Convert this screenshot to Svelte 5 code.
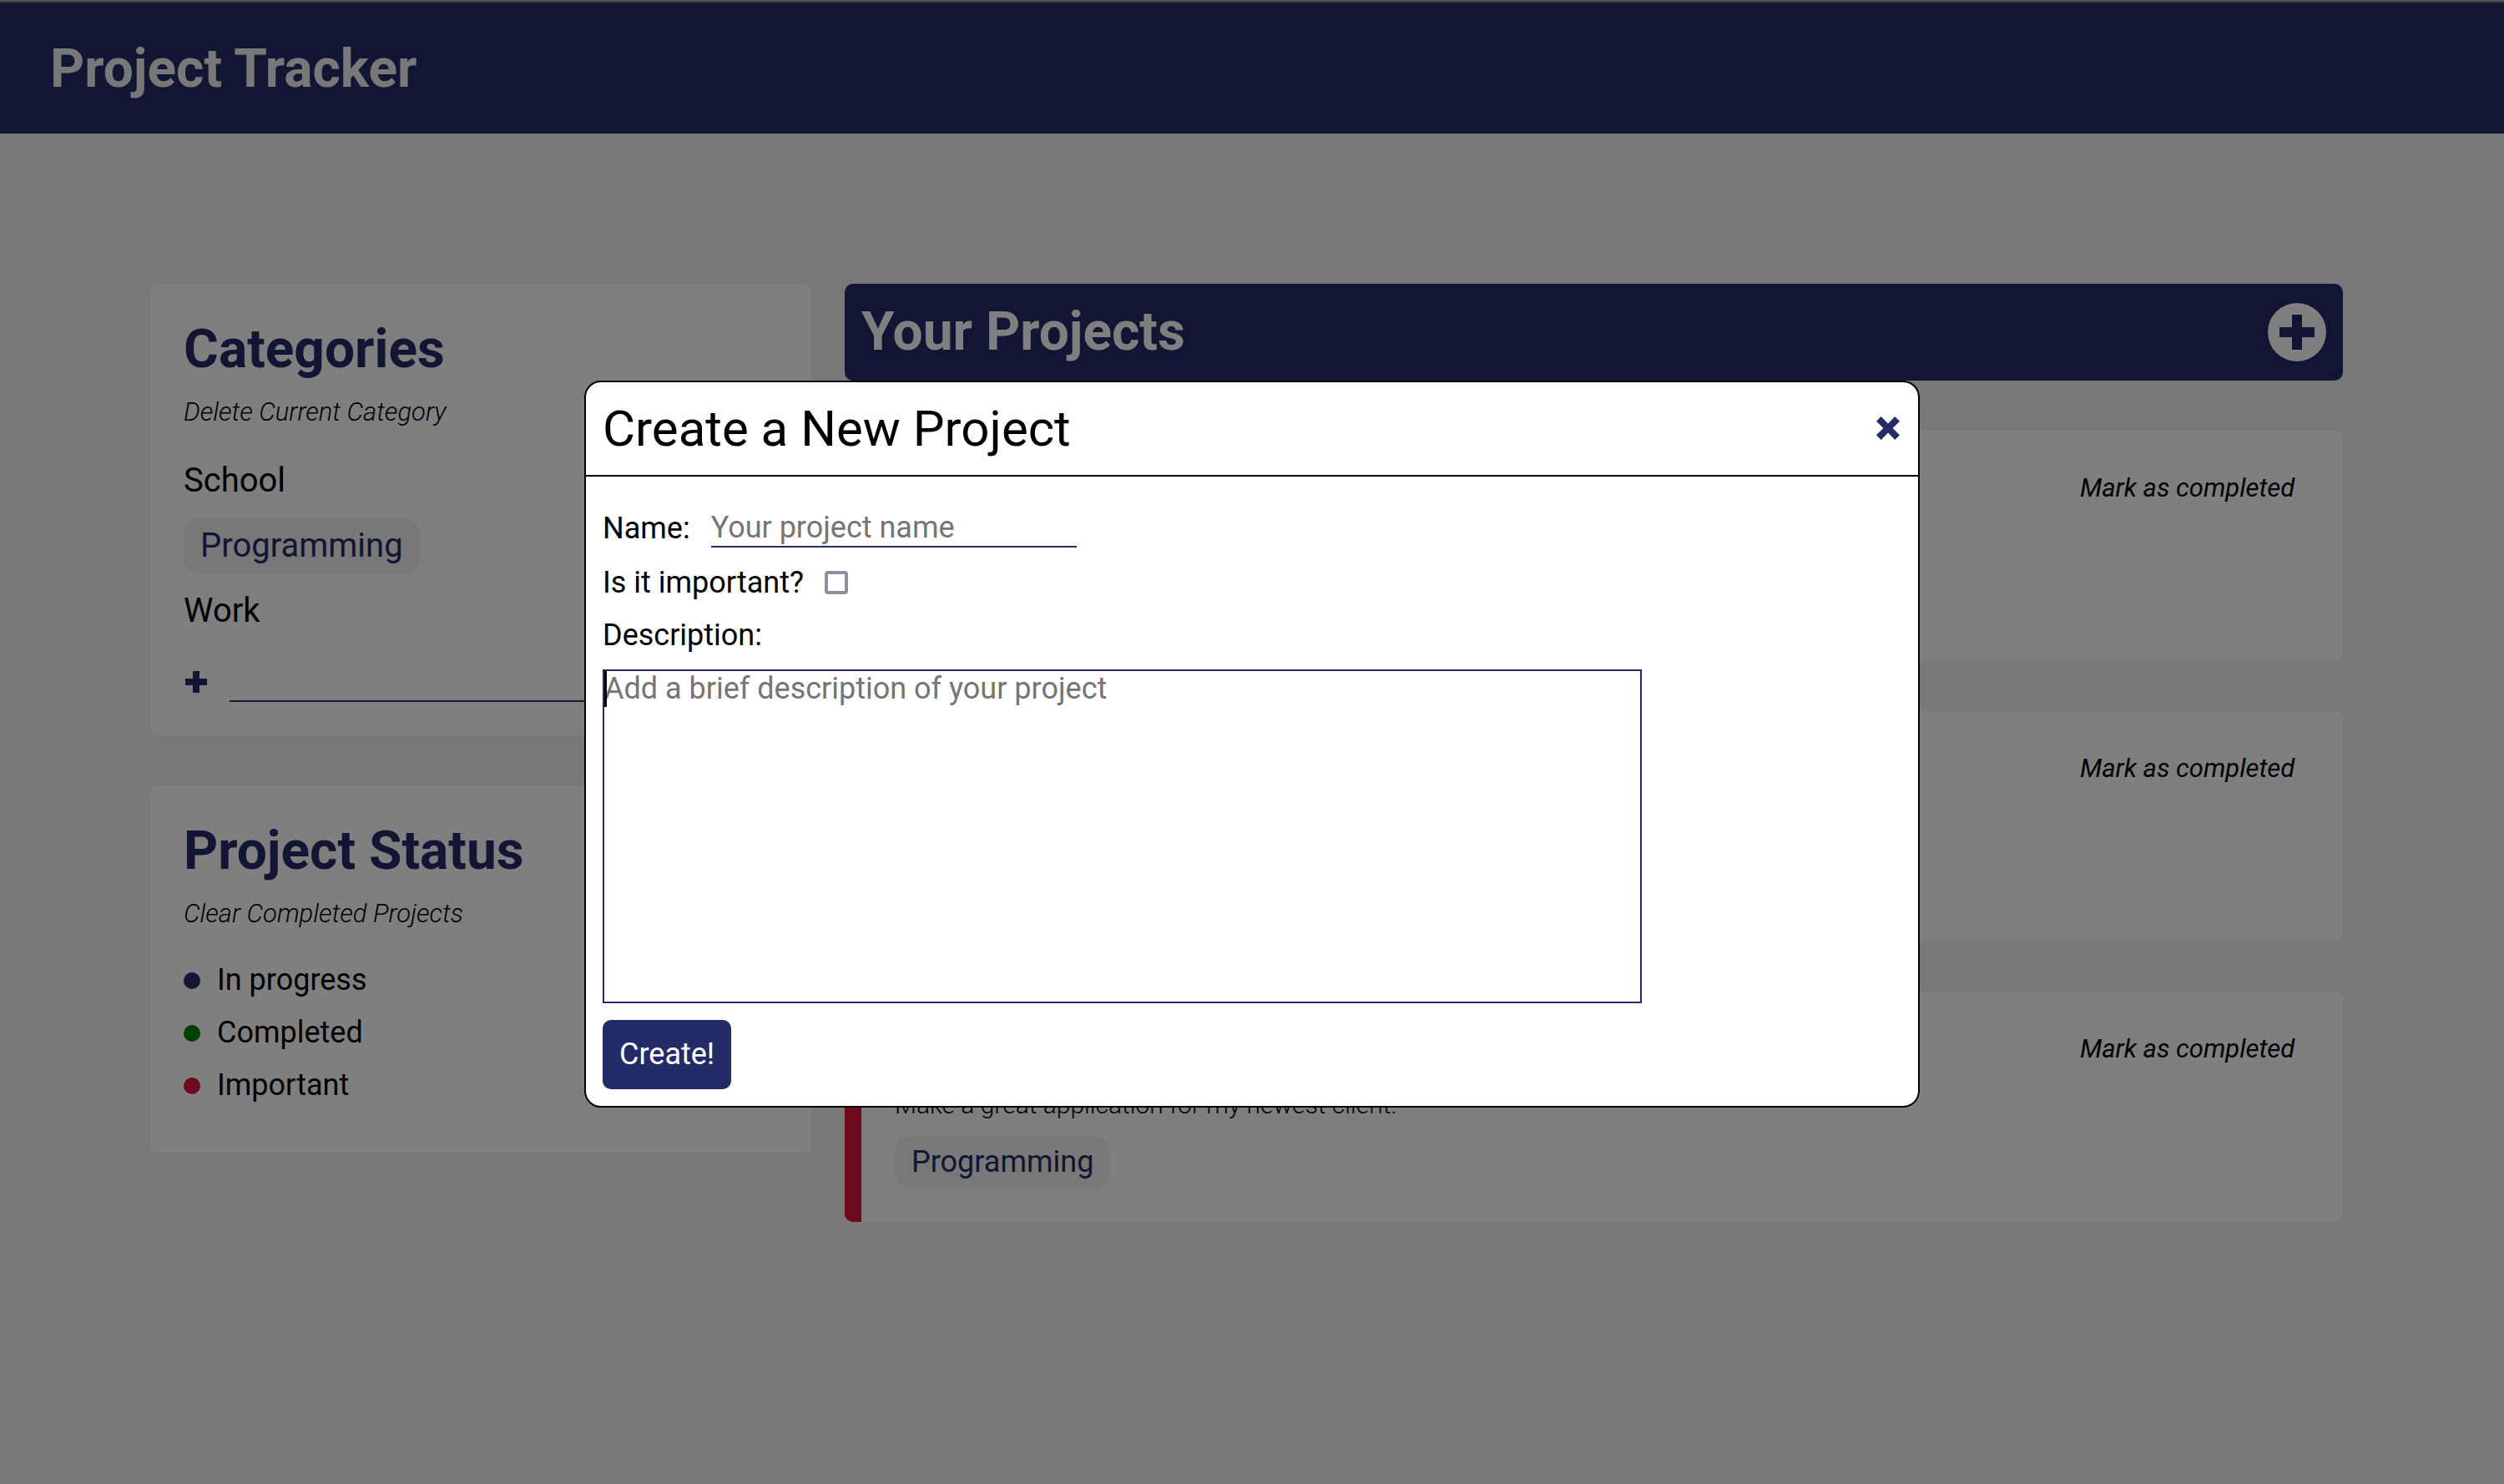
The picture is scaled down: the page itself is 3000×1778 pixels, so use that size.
<script>
  const categories = [
    { name: 'School', active: false },
    { name: 'Programming', active: true },
    { name: 'Work', active: false }
  ];
  const statuses = [
    { name: 'In progress', tone: 'navy' },
    { name: 'Completed', tone: 'green' },
    { name: 'Important', tone: 'crimson' }
  ];
  const projects = [
    { tone: 'navy', description: '', tag: '' },
    { tone: 'navy', description: '', tag: '' },
    { tone: 'crimson', description: 'Make a great application for my newest client.', tag: 'Programming' }
  ];
  let name = $state('');
  let important = $state(false);
  let description = $state('');
  let newCategory = $state('');
</script>

<div class="edge"></div>
<div class="page">
  <header class="topbar"><h1>Project Tracker</h1></header>

  <main>
    <aside>
      <section class="panel categories">
        <h2>Categories</h2>
        <button class="subtle">Delete Current Category</button>
        <ul class="category-list">
          {#each categories as c}
            <li><button class="category" class:active={c.active}>{c.name}</button></li>
          {/each}
        </ul>
        <div class="add-row">
          <button class="icon" aria-label="Add category">
            <svg width="30" height="30" viewBox="0 0 30 30"><path d="M11 2h8v9h9v8h-9v9h-8v-9H2v-8h9z" /></svg>
          </button>
          <input type="text" aria-label="New category" bind:value={newCategory} />
        </div>
      </section>

      <section class="panel status">
        <h2>Project Status</h2>
        <button class="subtle">Clear Completed Projects</button>
        <ul class="status-list">
          {#each statuses as s}
            <li><span class="dot {s.tone}"></span>{s.name}</li>
          {/each}
        </ul>
      </section>
    </aside>

    <section class="projects">
      <div class="projects-bar">
        <h2>Your Projects</h2>
        <button class="add-project" aria-label="Add project">
          <svg width="42" height="42" viewBox="0 0 42 42"><path d="M15 0h12v15h15v12H27v15H15V27H0V15h15z" /></svg>
        </button>
      </div>
      {#each projects as p}
        <article class="card {p.tone}">
          <div class="card-head"><button class="mark">Mark as completed</button></div>
          {#if p.description}<p>{p.description}</p>{/if}
          {#if p.tag}<span class="tag">{p.tag}</span>{/if}
        </article>
      {/each}
    </section>
  </main>
</div>

<div class="overlay">
  <div class="modal" role="dialog" aria-modal="true" aria-labelledby="modal-title">
    <div class="modal-head">
      <h2 id="modal-title">Create a New Project</h2>
      <button class="icon" aria-label="Close">
        <svg width="32" height="32" viewBox="0 0 32 32"><path d="M7.7 2 16 10.4 24.3 2 30 7.7 21.6 16 30 24.3 24.3 30 16 21.6 7.7 30 2 24.3 10.4 16 2 7.7z" /></svg>
      </button>
    </div>
    <form onsubmit={(e) => e.preventDefault()}>
      <div class="field name">
        <label for="name">Name:</label>
        <input id="name" type="text" placeholder="Your project name" bind:value={name} />
      </div>
      <div class="field check">
        <label for="important">Is it important?</label>
        <input id="important" type="checkbox" bind:checked={important} />
      </div>
      <label class="desc-label" for="description">Description:</label>
      <div class="area">
        <textarea id="description" placeholder="Add a brief description of your project" bind:value={description}></textarea>
        <span class="caret"></span>
      </div>
      <button class="create" type="submit">Create!</button>
    </form>
  </div>
</div>

<style>
  :global(body) {
    background: #f0f0f0;
    font-family: Roboto, sans-serif;
    color: #000;
  }
  :global(*) {
    box-sizing: border-box;
  }
  h1, h2, p, ul {
    margin: 0;
    padding: 0;
  }
  ul {
    list-style: none;
  }
  button, input, textarea {
    font: inherit;
    color: inherit;
    background: none;
    border: 0;
    border-radius: 0;
    padding: 0;
    margin: 0;
    outline: 0;
  }
  button {
    cursor: pointer;
  }
  svg {
    display: block;
    fill: #242c68;
  }
  h1, h2 {
    font-size: 64px;
    line-height: 78px;
    font-weight: 700;
  }
  .edge {
    height: 4px;
    background: #515156;
    border-bottom: 2px solid #2b2a33;
  }
  .topbar {
    background: #242c68;
    color: #f0f0f0;
    padding: 40px 60px 38px;
  }
  main {
    display: grid;
    grid-template-columns: 30% 68%;
    gap: 40px;
    align-items: start;
    padding: 180px 6%;
  }
  aside, .projects {
    display: flex;
    flex-direction: column;
    gap: 60px;
  }
  .panel {
    background: #fff;
    border-radius: 10px;
    padding: 40px;
  }
  .panel h2 {
    color: #242c68;
  }
  .subtle {
    display: block;
    font-size: 31px;
    line-height: 36px;
    font-style: italic;
    font-weight: 300;
    margin-top: 18px;
  }
  .category-list {
    display: flex;
    flex-direction: column;
    align-items: flex-start;
    gap: 20px;
    margin-top: 40px;
    font-size: 40px;
    line-height: 48px;
  }
  .category {
    display: block;
  }
  .category.active {
    background: #f0f0f0;
    color: #242c68;
    border-radius: 20px;
    padding: 10px 20px;
  }
  .add-row {
    display: flex;
    align-items: center;
    gap: 25px;
    margin-top: 36px;
  }
  .add-row input {
    flex: 1;
    min-width: 0;
    height: 49px;
    border-bottom: 2px solid #242c68;
  }
  .status-list {
    display: flex;
    flex-direction: column;
    gap: 20px;
    margin-top: 40px;
    padding-bottom: 20px;
    font-size: 36px;
    line-height: 43px;
  }
  .status-list li {
    display: flex;
    align-items: center;
    gap: 20px;
  }
  .dot {
    width: 20px;
    height: 20px;
    border-radius: 50%;
  }
  .dot.navy {
    background: #242c68;
  }
  .dot.green {
    background: #008000;
  }
  .dot.crimson {
    background: #dc143c;
  }
  .projects-bar {
    display: flex;
    align-items: center;
    justify-content: space-between;
    background: #242c68;
    color: #fff;
    border-radius: 10px;
    padding: 19px 20px;
  }
  .add-project {
    display: flex;
    align-items: center;
    justify-content: center;
    width: 70px;
    height: 70px;
    border-radius: 50%;
    background: #fff;
  }
  .card {
    min-height: 276px;
    background: #fff;
    border-left: 20px solid #242c68;
    border-radius: 10px;
    padding: 40px;
  }
  .card.crimson {
    border-left-color: #dc143c;
  }
  .card-head {
    display: flex;
    align-items: center;
    justify-content: flex-end;
    min-height: 58px;
    padding-right: 18px;
  }
  .mark {
    font-size: 31px;
    line-height: 36px;
    font-style: italic;
  }
  .card p {
    margin: 20px 0;
    font-size: 30px;
    line-height: 35px;
    font-weight: 300;
  }
  .tag {
    display: inline-block;
    background: #f0f0f0;
    color: #242c68;
    border-radius: 20px;
    padding: 10px 20px;
    font-size: 36px;
    line-height: 43px;
  }
  .overlay {
    position: fixed;
    inset: 4px 0 0;
    display: flex;
    align-items: center;
    justify-content: center;
    background: rgba(0, 0, 0, 0.5);
  }
  .modal {
    width: 1600px;
    max-width: 100%;
    background: #fff;
    border: 2px solid #000;
    border-radius: 20px;
  }
  .modal-head {
    display: flex;
    align-items: center;
    justify-content: space-between;
    padding: 20px;
    border-bottom: 2px solid #000;
  }
  .modal-head h2 {
    font-size: 60px;
    line-height: 71px;
    font-weight: 400;
  }
  form {
    display: flex;
    flex-direction: column;
    align-items: flex-start;
    padding: 40px 20px 20px;
    font-size: 36px;
    line-height: 43px;
  }
  .field {
    display: flex;
    align-items: center;
    gap: 25px;
  }
  .name {
    margin-bottom: 20px;
  }
  .name input {
    width: 438px;
    height: 45px;
    border-bottom: 2px solid #242c68;
  }
  .check {
    line-height: 45px;
    margin-bottom: 18px;
  }
  .check input {
    appearance: none;
    width: 28px;
    height: 28px;
    border: 4px solid #8f8f9d;
    border-radius: 4px;
  }
  .desc-label {
    line-height: 45px;
  }
  ::placeholder {
    color: #757575;
    opacity: 1;
  }
  .area {
    position: relative;
    width: 80%;
    margin: 18px 0 20px;
  }
  textarea {
    display: block;
    width: 100%;
    height: 400px;
    border: 2px solid #242c68;
    resize: none;
  }
  .caret {
    position: absolute;
    left: 2px;
    top: 2px;
    width: 3px;
    height: 43px;
    background: #000;
  }
  .create {
    background: #242c68;
    color: #fff;
    border-radius: 10px;
    padding: 20px;
  }
</style>
